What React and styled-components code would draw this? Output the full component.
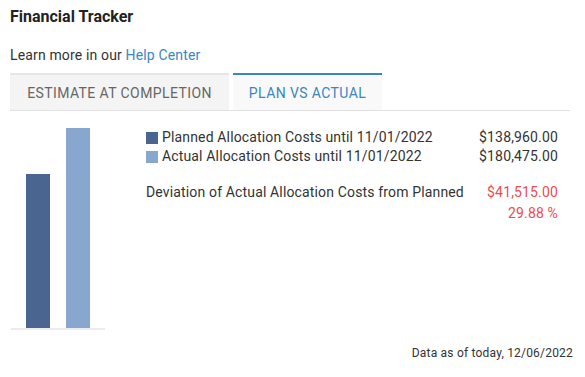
import React from 'react';
import styled, { createGlobalStyle } from 'styled-components';

const GlobalStyle = createGlobalStyle`
  body {
    margin: 0;
    background: #ffffff;
    font-family: Roboto, 'Liberation Sans', sans-serif;
    color: #333333;
    letter-spacing: 0.15px;
  }
`;

const planned = '#4a6590';
const actual = '#88a7ce';
const accent = '#3a86c2';
const danger = '#f04b4b';

const Wrapper = styled.section`
  width: 585px;
  height: 377px;
  box-sizing: border-box;
  padding: 6px 10px 0 10px;
`;

const Title = styled.h2`
  margin: 0;
  font-size: 16px;
  line-height: 21px;
  font-weight: 700;
  color: #222;
  letter-spacing: 0;
`;

const Intro = styled.p`
  margin: 18px 0 0 0;
  font-size: 14px;
  line-height: 20px;
  color: #333;
`;

const Link = styled.a`
  color: ${accent};
  text-decoration: none;
`;

const Tabs = styled.div`
  display: flex;
  gap: 4px;
  margin-top: 8px;
  border-bottom: 1px solid #e2e2e2;
  margin-right: 5px;
`;

const Tab = styled.div`
  box-sizing: border-box;
  width: ${(p) => p.$width}px;
  height: 37px;
  display: flex;
  align-items: center;
  justify-content: center;
  font-size: 14px;
  letter-spacing: 0.4px;
  text-transform: uppercase;
  border-top: 2px solid ${(p) => (p.$active ? accent : '#e6e6e6')};
  background: ${(p) => (p.$active ? '#f9f9f9' : '#f4f4f4')};
  color: ${(p) => (p.$active ? accent : '#666')};
`;

const Body = styled.div`
  display: flex;
  margin-top: 17px;
`;

const Chart = styled.div`
  width: 79px;
  height: 200px;
  box-sizing: content-box;
  margin-left: 1px;
  padding-left: 15px;
  display: flex;
  align-items: flex-end;
  gap: 16px;
  border-bottom: 2px solid #ececec;
`;

const Bar = styled.div`
  width: 24px;
  background: ${(p) => p.$color};
`;

const Legend = styled.div`
  margin-left: 41px;
  width: 412px;
  display: grid;
  grid-template-columns: 1fr auto;
  align-content: start;
  font-size: 14px;
  line-height: 19px;
`;

const Label = styled.div`
  display: flex;
  align-items: center;
  gap: 4px;
  margin-top: ${(p) => (p.$gap ? '16px' : '0')};
  line-height: ${(p) => (p.$tall ? '21px' : '19px')};
`;

const Value = styled.div`
  text-align: right;
  color: ${(p) => (p.$red ? danger : '#333')};
  margin-top: ${(p) => (p.$gap ? '16px' : '0')};
  line-height: ${(p) => (p.$tall ? '21px' : '19px')};
`;

const Swatch = styled.span`
  width: 12px;
  height: 12px;
  background: ${(p) => p.$color};
  flex: none;
`;

const Footer = styled.div`
  margin-top: 15px;
  text-align: right;
  font-size: 12px;
  line-height: 16px;
  color: #333;
  padding-right: 2px;
  letter-spacing: 0.2px;
`;

const rows = [
  { label: 'Planned Allocation Costs until 11/01/2022', value: 138960, color: planned },
  { label: 'Actual Allocation Costs until 11/01/2022', value: 180475, color: actual },
];

const money = (n) =>
  '$' + n.toLocaleString('en-US', { minimumFractionDigits: 2, maximumFractionDigits: 2 });

export default function App() {
  const max = Math.max(...rows.map((r) => r.value));
  const deviation = rows[1].value - rows[0].value;
  const pct = ((deviation / rows[0].value) * 100).toFixed(2);

  return (
    <Wrapper>
      <GlobalStyle />
      <Title>Financial Tracker</Title>
      <Intro>
        Learn more in our <Link href="#">Help Center</Link>
      </Intro>
      <Tabs>
        <Tab $width={219}>Estimate at Completion</Tab>
        <Tab $width={149} $active>
          Plan vs Actual
        </Tab>
      </Tabs>
      <Body>
        <Chart>
          {rows.map((r) => (
            <Bar key={r.label} $color={r.color} style={{ height: `${(r.value / max) * 200}px` }} />
          ))}
        </Chart>
        <Legend>
          {rows.map((r) => (
            <React.Fragment key={r.label}>
              <Label>
                <Swatch $color={r.color} />
                {r.label}
              </Label>
              <Value>{money(r.value)}</Value>
            </React.Fragment>
          ))}
          <Label $gap $tall>
            Deviation of Actual Allocation Costs from Planned
          </Label>
          <Value $red $gap $tall>
            {money(deviation)}
          </Value>
          <div />
          <Value $red $tall>
            {pct} %
          </Value>
        </Legend>
      </Body>
      <Footer>Data as of today, 12/06/2022</Footer>
    </Wrapper>
  );
}
